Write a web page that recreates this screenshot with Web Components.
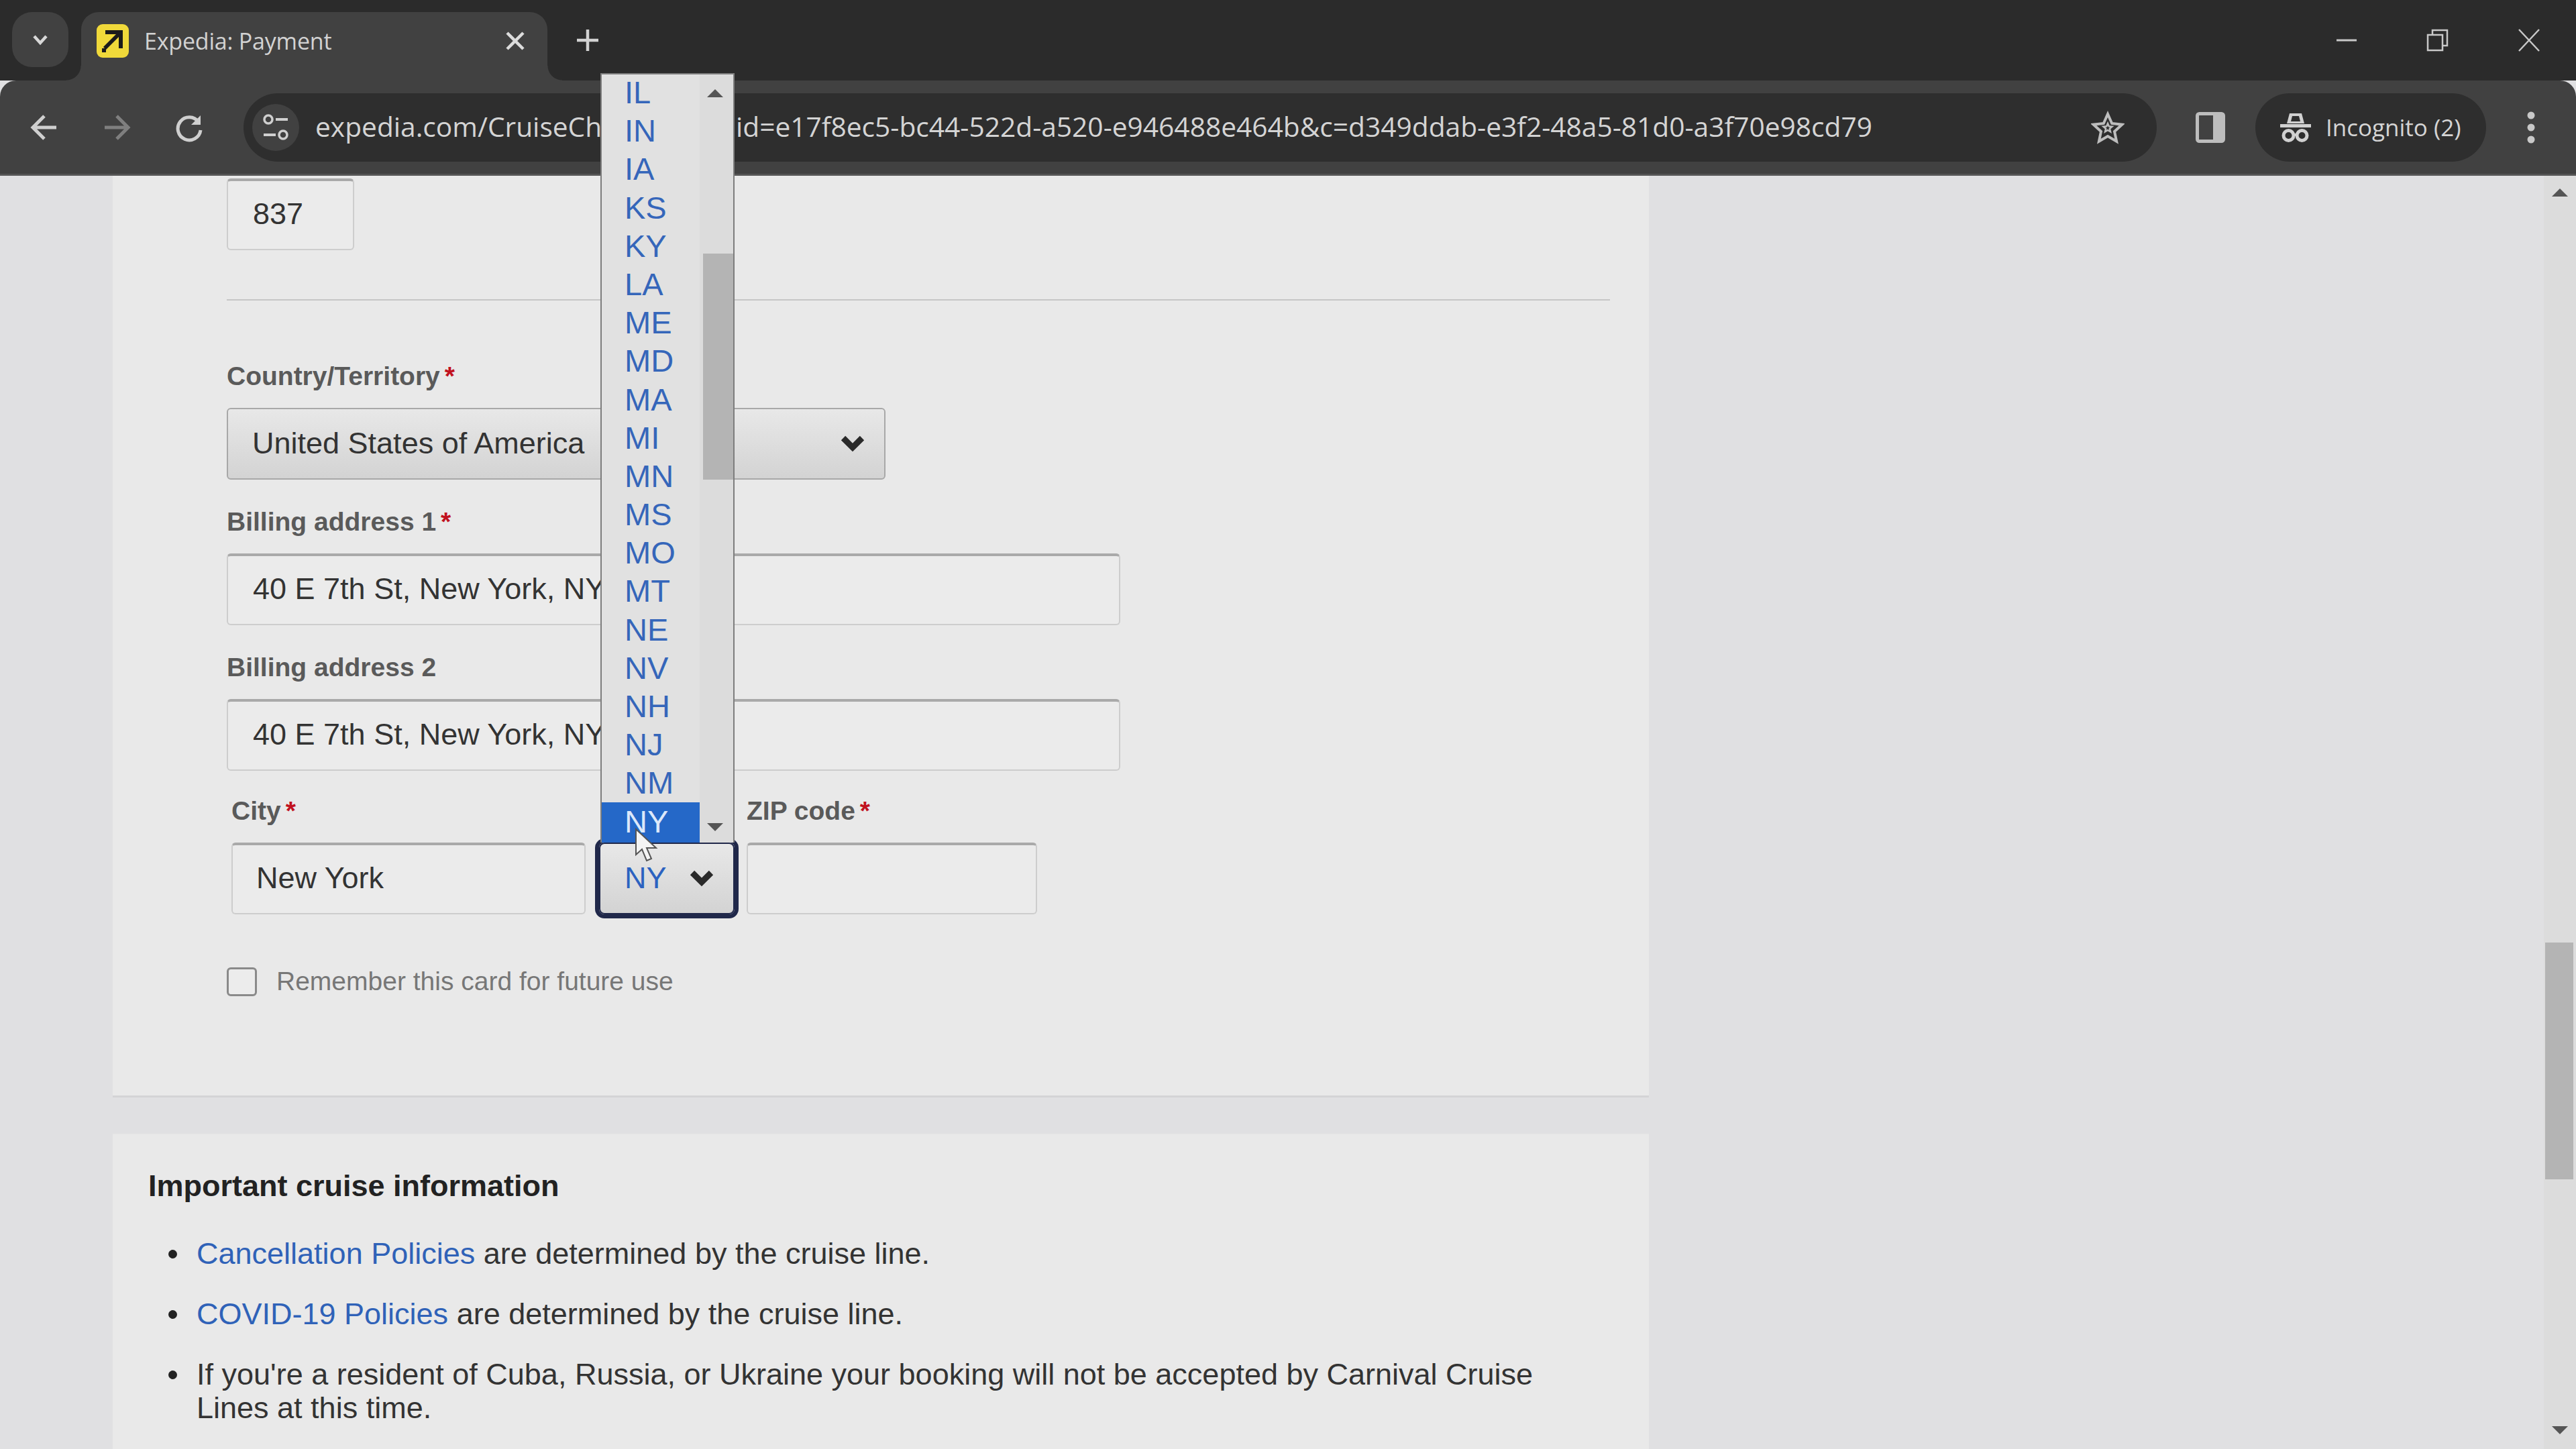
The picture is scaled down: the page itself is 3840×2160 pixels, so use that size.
<!DOCTYPE html>
<html>
<head>
<meta charset="utf-8">
<title>Expedia: Payment</title>
<style>
  html, body { margin: 0; padding: 0; }
  body {
    position: relative;
    width: 3840px;
    height: 2160px;
    overflow: hidden;
    display: flex;
    flex-direction: column;
    font-family: "Liberation Sans", Arial, sans-serif;
    background: #e0e0e2;
  }
</style>
</head>
<body>
<browser-tabs></browser-tabs>
<browser-toolbar></browser-toolbar>
<page-view>
  <form-card>
    <text-box value="837" style="width:190px;height:107px;"></text-box>
    <form-divider></form-divider>
    <form-field label="Country/Territory" required style="margin-top:89px;">
      <select-box value="United States of America" style="width:982px;"></select-box>
    </form-field>
    <form-field label="Billing address 1" required style="margin-top:39px;">
      <text-box value="40 E 7th St, New York, NY" style="width:1332px;"></text-box>
    </form-field>
    <form-field label="Billing address 2" style="margin-top:39px;">
      <text-box value="40 E 7th St, New York, NY" style="width:1332px;"></text-box>
    </form-field>
    <form-row>
      <form-field label="City" required>
        <text-box value="New York" style="width:528px;padding-left:35px;"></text-box>
      </form-field>
      <form-field style="margin-left:20px;">
        <select-box value="NY" focused style="width:202px;"></select-box>
      </form-field>
      <form-field label="ZIP code" required style="margin-left:18px;">
        <text-box style="width:433px;"></text-box>
      </form-field>
    </form-row>
    <check-line>Remember this card for future use</check-line>
  </form-card>
  <info-card heading="Important cruise information">
    <info-item><a-link>Cancellation Policies</a-link> are determined by the cruise line.</info-item>
    <info-item><a-link>COVID-19 Policies</a-link> are determined by the cruise line.</info-item>
    <info-item>If you're a resident of Cuba, Russia, or Ukraine your booking will not be accepted by Carnival Cruise Lines at this time.</info-item>
  </info-card>
</page-view>
<state-popup></state-popup>
<mouse-cursor></mouse-cursor>

<script>
(() => {
  const define = (name, html, setup) => {
    customElements.define(name, class extends HTMLElement {
      constructor() {
        super();
        this.attachShadow({ mode: 'open' });
      }
      connectedCallback() {
        this.shadowRoot.innerHTML = typeof html === 'function' ? html(this) : html;
        if (setup) setup(this);
      }
    });
  };

  define('browser-tabs', `
    <style>
      :host { display: flex; height: 120px; flex: none; background: #2b2b2b; font-family: "Open Sans", sans-serif; color: #d2d2d2; }
      .tab-search { width: 84px; height: 82px; margin: 18px 0 0 18px; background: #414141; border-radius: 30px; display: flex; align-items: center; justify-content: center; }
      .tab { position: relative; width: 695px; height: 102px; margin: 18px 0 0 19px; background: #414141; border-radius: 26px 26px 0 0; display: flex; align-items: center; box-sizing: border-box; padding: 0 0 16px 23px; }
      .tab::before, .tab::after { content: ""; position: absolute; bottom: 0; width: 22px; height: 22px; }
      .tab::before { left: -22px; background: radial-gradient(circle at 0 0, #2b2b2b 21px, #414141 22px); }
      .tab::after { right: -22px; background: radial-gradient(circle at 100% 0, #2b2b2b 21px, #414141 22px); }
      .fav { width: 48px; height: 50px; flex: none; }
      .title { margin-left: 23px; font-size: 34px; white-space: nowrap; letter-spacing: -0.2px; }
      .close { margin-left: auto; margin-right: 28px; width: 40px; height: 40px; }
      .plus { width: 40px; height: 40px; margin: 40px 0 0 40px; }
      .win { margin-left: auto; display: flex; padding-right: 2px; }
      .win div { width: 136px; height: 120px; display: flex; align-items: center; justify-content: center; }
    </style>
    <div class="tab-search">
      <svg width="30" height="30" viewBox="0 0 30 30"><path d="M6 10l9 10 9-10" fill="none" stroke="#d8d8d8" stroke-width="4.5"/></svg>
    </div>
    <div class="tab">
      <svg class="fav" viewBox="0 0 48 50">
        <rect width="48" height="50" rx="9" fill="#f0d93a"/>
        <path d="M13 9h26v27h-6V19L14 38l-4-4 19-19H13z" fill="#1b1b1b"/>
        <rect x="8" y="36" width="6" height="6" fill="#1b1b1b"/>
      </svg>
      <span class="title">Expedia: Payment</span>
      <svg class="close" viewBox="0 0 40 40"><path d="M8 8l24 24M32 8L8 32" stroke="#dcdcdc" stroke-width="4.5"/></svg>
    </div>
    <svg class="plus" viewBox="0 0 40 40"><path d="M20 4v32M4 20h32" stroke="#d2d2d2" stroke-width="4.5"/></svg>
    <div class="win">
      <div><svg width="34" height="34" viewBox="0 0 34 34"><path d="M2 17h30" stroke="#c8c8c8" stroke-width="3"/></svg></div>
      <div><svg width="34" height="34" viewBox="0 0 34 34"><path d="M2 9h22v23H2zM9 9V2h22v23h-7" fill="none" stroke="#c8c8c8" stroke-width="2.5"/></svg></div>
      <div><svg width="36" height="36" viewBox="0 0 36 36"><path d="M3 2l30 32M33 2L3 34" stroke="#c8c8c8" stroke-width="2.5"/></svg></div>
    </div>
  `);

  define('browser-toolbar', `
    <style>
      :host { display: flex; align-items: center; height: 142px; flex: none; box-sizing: border-box; background: #414141; border-radius: 24px 24px 0 0; border-bottom: 3px solid #555; color: #d0d0d0; position: relative; font-family: "Open Sans", sans-serif; }
      .nav { width: 108px; height: 100px; display: flex; align-items: center; justify-content: center; flex: none; }
      .nav.back { margin-left: 12px; }
      .omni { flex: 1; min-width: 0; height: 102px; margin-left: 27px; background: #2e2e2e; border-radius: 51px; display: flex; align-items: center; padding: 0 48px 0 13px; }
      .site { width: 70px; height: 70px; flex: none; border-radius: 50%; background: #414141; display: flex; align-items: center; justify-content: center; }
      .url { flex: 1; margin: 0 30px 0 24px; padding-bottom: 3px; display: flex; font-size: 40.700px; white-space: nowrap; overflow: hidden; color: #d4d4d4; }
      .host { width: 627px; flex: none; }
      .panel { width: 147px; flex: none; display: flex; justify-content: center; padding-left: 12px; box-sizing: border-box; }
      .chip { width: 344px; height: 102px; flex: none; box-sizing: border-box; padding-left: 36px; background: #2e2e2e; border-radius: 51px; display: flex; align-items: center; gap: 21px; font-size: 35px; color: #d4d4d4; white-space: nowrap; }
      .dots { width: 134px; flex: none; display: flex; justify-content: center; }
    </style>
    <div class="nav back"><svg width="44" height="44" viewBox="0 0 44 44"><path d="M40 22H6M22 5L5 22l17 17" fill="none" stroke="#cfcfcf" stroke-width="5"/></svg></div>
    <div class="nav"><svg width="44" height="44" viewBox="0 0 44 44"><path d="M4 22h34M22 5l17 17-17 17" fill="none" stroke="#7f7f7f" stroke-width="5"/></svg></div>
    <div class="nav"><svg width="44" height="44" viewBox="0 0 44 44"><path d="M36 14A17 17 0 1 0 39 26" fill="none" stroke="#cfcfcf" stroke-width="5"/><path d="M39 4v14H25z" fill="#cfcfcf"/></svg></div>
    <div class="omni">
      <div class="site">
        <svg width="40" height="44" viewBox="0 0 40 44"><circle cx="9" cy="10" r="6" fill="none" stroke="#cfcfcf" stroke-width="3.5"/><path d="M20 10h18M2 33h18" stroke="#cfcfcf" stroke-width="4"/><circle cx="31" cy="33" r="6" fill="none" stroke="#cfcfcf" stroke-width="3.5"/></svg>
      </div>
      <div class="url"><span class="host">expedia.com/CruiseChe</span><span>id=e17f8ec5-bc44-522d-a520-e946488e464b&amp;c=d349ddab-e3f2-48a5-81d0-a3f70e98cd79</span></div>
      <svg width="50" height="50" viewBox="0 0 50 50" style="flex:none"><path d="M25 5l6.200 14 15 1.700-11.200 10.200 3.100 14.800L25 38l-13.100 7.700 3.100-14.800L3.800 20.700l15-1.700z" fill="none" stroke="#bdbdbd" stroke-width="4"/><path d="M25 19l1.800 4.300 4.700.4-3.600 3.100 1.100 4.600-4-2.400-4 2.400 1.100-4.600-3.600-3.100 4.700-.4z" fill="none" stroke="#bdbdbd" stroke-width="2.500"/></svg>
    </div>
    <div class="panel"><svg width="44" height="46" viewBox="0 0 44 46"><rect x="2.500" y="2.500" width="39" height="41" rx="3" fill="none" stroke="#bdbdbd" stroke-width="5"/><rect x="26" y="2" width="16" height="42" fill="#bdbdbd"/></svg></div>
    <div class="chip">
      <svg width="48" height="50" viewBox="0 0 48 50"><path d="M15 4h18l4 15H11zM1 20h46v5H1z" fill="#d0d0d0"/><path d="M19 8h10l2 8H17z" fill="#2e2e2e"/><circle cx="13.500" cy="37" r="7.500" fill="none" stroke="#d0d0d0" stroke-width="5"/><circle cx="33.500" cy="37" r="7.500" fill="none" stroke="#d0d0d0" stroke-width="5"/><path d="M21 36h6" stroke="#d0d0d0" stroke-width="4"/></svg>
      <span>Incognito (2)</span>
    </div>
    <div class="dots"><svg width="14" height="52" viewBox="0 0 14 52"><circle cx="7" cy="8" r="5.500" fill="#c8c8c8"/><circle cx="7" cy="26" r="5.500" fill="#c8c8c8"/><circle cx="7" cy="44" r="5.500" fill="#c8c8c8"/></svg></div>
  `);

  define('page-view', `
    <style>
      :host { display: flex; flex: 1; min-height: 0; background: #e0e0e2; overflow: hidden; }
      .main { flex: 1; min-width: 0; padding-left: 168px; }
      .bar { width: 48px; flex: none; background: #dcdcdc; position: relative; }
      .up, .down { position: absolute; left: 12px; width: 0; height: 0; border-left: 12px solid transparent; border-right: 12px solid transparent; }
      .up { top: 19px; border-bottom: 12px solid #555; }
      .down { bottom: 22px; border-top: 12px solid #555; }
      .thumb { position: absolute; left: 2px; right: 4px; top: 1143px; height: 353px; background: #b4b4b4; }
    </style>
    <div class="main"><slot></slot></div>
    <div class="bar"><div class="up"></div><div class="thumb"></div><div class="down"></div></div>
  `);

  define('form-card', `
    <style>
      :host { display: block; width: 2290px; height: 1374px; box-sizing: border-box; padding: 4px 0 0 170px; background: #e9e9e9; border-bottom: 3px solid #d4d4d6; color: #333; }
    </style>
    <slot></slot>
  `);

  define('form-divider', `
    <style>:host { display: block; width: 2062px; height: 2px; margin-top: 73px; background: #c6c6c6; }</style>
  `);

  define('form-row', `
    <style>:host { display: flex; margin: 36px 0 0 7px; align-items: flex-end; }</style>
    <slot></slot>
  `);

  define('form-field', host => `
    <style>
      :host { display: block; }
      .lbl { height: 48px; line-height: 48px; margin-bottom: 23px; font-size: 39px; font-weight: bold; color: #5a5a5a; white-space: nowrap; }
      .lbl b { color: #c1121f; margin-left: 7px; }
    </style>
    ${host.hasAttribute('label') ? `<div class="lbl">${host.getAttribute('label')}${host.hasAttribute('required') ? '<b>*</b>' : ''}</div>` : ''}
    <slot></slot>
  `);

  define('text-box', host => `
    <style>
      :host { display: block; height: 107px; box-sizing: border-box; padding-left: 37px; background: #ebebeb; border: 2px solid #cdcdcd; border-top: 4px solid #a9a9a9; border-radius: 6px; font-size: 45px; line-height: 98px; color: #333; white-space: nowrap; overflow: hidden; }
    </style>
    ${host.getAttribute('value') || ''}
  `);

  define('select-box', host => `
    <style>
      :host { display: flex; align-items: center; height: 107px; box-sizing: border-box; padding: 0 28px 2px 36px; border: 2px solid #a8a8a8; border-radius: 6px; background: linear-gradient(#e8e8e8, #d3d3d3); font-size: 45px; color: #333; white-space: nowrap; }
      :host([focused]) { color: #2c62c0; box-shadow: 0 0 0 6px #20284a; border-radius: 8px; border-color: #20284a; padding-left: 36px; padding-right: 28px; }
      svg { margin-left: auto; }
    </style>
    <span>${host.getAttribute('value')}</span>
    <svg width="38" height="26" viewBox="0 0 38 26"><path d="M5 5l14 14L33 5" fill="none" stroke="#2a2a2a" stroke-width="9"/></svg>
  `);

  define('check-line', `
    <style>
      :host { display: flex; align-items: center; margin-top: 78px; font-size: 39px; color: #777; white-space: nowrap; }
      .box { width: 45px; height: 43px; box-sizing: border-box; flex: none; background: #ececec; border: 3px solid #8a8a8a; border-radius: 6px; margin-right: 29px; }
    </style>
    <div class="box"></div><span><slot></slot></span>
  `);

  define('info-card', host => `
    <style>
      :host { display: block; width: 2290px; margin-top: 54px; height: 480px; box-sizing: border-box; padding: 52px 0 0 53px; background: #e9e9e9; border-top: 1px solid #e6e6e6; color: #333; }
      h2 { margin: 0 0 51px; font-size: 45px; line-height: 50px; font-weight: bold; color: #222; }
      .list { display: flex; flex-direction: column; gap: 40px; }
    </style>
    <h2>${host.getAttribute('heading')}</h2>
    <div class="list"><slot></slot></div>
  `);

  define('info-item', `
    <style>
      :host { display: grid; grid-template-columns: 72px 2040px; font-size: 45px; line-height: 50px; color: #333; }
      i { width: 13px; height: 13px; margin: 19px 0 0 30px; border-radius: 50%; background: #222; }
    </style>
    <i></i><div><slot></slot></div>
  `);

  define('a-link', `<style>:host { color: #2f62b8; }</style><slot></slot>`);

  const states = 'IL IN IA KS KY LA ME MD MA MI MN MS MO MT NE NV NH NJ NM NY'.split(' ');
  define('state-popup', `
    <style>
      :host { position: absolute; left: 895px; top: 109px; width: 200px; height: 1147px; box-sizing: border-box; display: flex; background: #e1e1e1; border: 2px solid #7d7d7d; border-bottom: 0; overflow: hidden; }
      .list { width: 146px; flex: none; margin-top: -2px; }
      .row { height: 57.200px; line-height: 57.200px; box-sizing: border-box; padding-left: 34px; font-size: 47px; color: #3566ba; }
      .row.sel { height: 60px; background: #2568c8; color: #dce8fa; }
      .track { flex: 1; position: relative; background: #dcdcdc; }
      .up, .down { position: absolute; left: 11px; width: 0; height: 0; border-left: 12px solid transparent; border-right: 12px solid transparent; }
      .up { top: 22px; border-bottom: 12px solid #555; }
      .down { bottom: 17px; border-top: 12px solid #555; }
      .thumb { position: absolute; left: 5px; right: 0; top: 267px; height: 337px; background: #b4b4b4; }
    </style>
    <div class="list"></div>
    <div class="track"><div class="up"></div><div class="thumb"></div><div class="down"></div></div>
  `, host => {
    const list = host.shadowRoot.querySelector('.list');
    states.forEach(s => {
      const row = document.createElement('div');
      row.className = s === 'NY' ? 'row sel' : 'row';
      row.textContent = s;
      list.appendChild(row);
    });
  });

  define('mouse-cursor', `
    <style>:host { position: absolute; left: 945px; top: 1234px; width: 40px; height: 52px; }</style>
    <svg width="40" height="52" viewBox="0 0 40 52"><path d="M3 2v38l9-8 7 17 7-3-7-16h14z" fill="#f4f4f4" stroke="#555" stroke-width="2"/></svg>
  `);
})();
</script>
</body>
</html>
